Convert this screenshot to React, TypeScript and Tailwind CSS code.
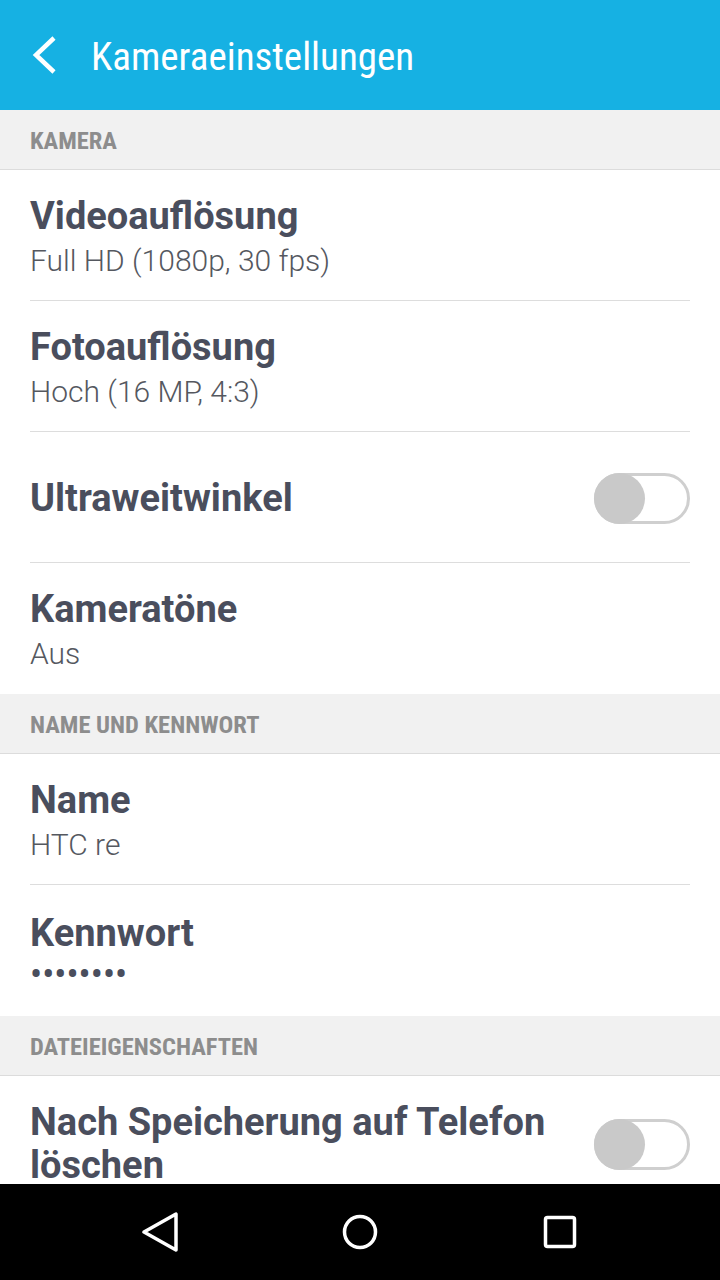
import React from "react";

const condensed = {
  fontFamily: '"Roboto Condensed", "Liberation Sans Narrow", Roboto, sans-serif',
};

type Item = {
  title: string;
  value?: string;
  toggle?: boolean;
  dots?: boolean;
};

type Section = {
  label: string;
  items: Item[];
};

const SECTIONS: Section[] = [
  {
    label: "KAMERA",
    items: [
      { title: "Videoauflösung", value: "Full HD (1080p, 30 fps)" },
      { title: "Fotoauflösung", value: "Hoch (16 MP, 4:3)" },
      { title: "Ultraweitwinkel", toggle: true },
      { title: "Kameratöne", value: "Aus" },
    ],
  },
  {
    label: "NAME UND KENNWORT",
    items: [
      { title: "Name", value: "HTC re" },
      { title: "Kennwort", dots: true },
    ],
  },
];

function Toggle() {
  return (
    <div className="relative h-[51px] w-[96px] shrink-0 rounded-full border-[3px] border-[#cfcfcf] bg-white">
      <div className="absolute -left-[3px] -top-[3px] h-[51px] w-[51px] rounded-full bg-[#c9c9c9]" />
    </div>
  );
}

function SectionHeader({ label }: { label: string }) {
  return (
    <div className="flex h-[60px] items-center border-b border-[#dcdcdc] bg-[#f1f1f1] px-[30px] pt-[3px]">
      <span
        className="text-[24.5px] font-bold text-[#8d8d8d]"
        style={condensed}
      >
        {label}
      </span>
    </div>
  );
}

function Row({ item, last }: { item: Item; last: boolean }) {
  return (
    <div className="px-[30px]">
      <div
        className={`flex h-[131px] items-center justify-between pt-[2px] ${
          last ? "" : "border-b border-[#dddddd]"
        }`}
      >
        <div className="flex flex-col">
          <span className="text-[38px] font-bold leading-[44px] text-[#4a4e5d]">
            {item.title}
          </span>
          {item.value && (
            <span className="mt-[5px] text-[30px] font-light leading-[36px] text-[#55585f]">
              {item.value}
            </span>
          )}
          {item.dots && (
            <span className="mt-[2px] text-[36px] leading-[36px] text-[#4a4e5d]">
              ••••••••
            </span>
          )}
        </div>
        {item.toggle && <Toggle />}
      </div>
    </div>
  );
}

export default function App() {
  return (
    <div
      className="flex h-[1280px] w-[720px] flex-col overflow-hidden bg-white"
      style={{ fontFamily: "Roboto, sans-serif" }}
    >
      <header className="flex h-[110px] shrink-0 items-center bg-[#16b1e3] pl-[30px]">
        <svg width="30" height="40" viewBox="0 0 30 40" fill="none">
          <path d="M24 3 L6 20 L24 37" stroke="white" strokeWidth="4.5" />
        </svg>
        <h1
          className="ml-[31px] pt-[4px] text-[39px] leading-none text-white"
          style={condensed}
        >
          Kameraeinstellungen
        </h1>
      </header>

      <main className="flex-1 overflow-hidden">
        {SECTIONS.map((section) => (
          <div key={section.label}>
            <SectionHeader label={section.label} />
            {section.items.map((item, i) => (
              <Row
                key={item.title}
                item={item}
                last={i === section.items.length - 1}
              />
            ))}
          </div>
        ))}
        <SectionHeader label="DATEIEIGENSCHAFTEN" />
        <div className="flex items-center justify-between px-[30px] pt-[25px]">
          <span className="w-[540px] text-[38px] font-bold leading-[43px] text-[#4a4e5d]">
            Nach Speicherung auf Telefon löschen
          </span>
          <Toggle />
        </div>
      </main>

      <nav className="flex h-[96px] shrink-0 items-center justify-center gap-[160px] bg-black">
        <svg width="40" height="40" viewBox="0 0 40 40" fill="none">
          <path
            d="M36 2 L36 38 L4 20 Z"
            stroke="white"
            strokeWidth="3.5"
            strokeLinejoin="round"
          />
        </svg>
        <svg width="40" height="40" viewBox="0 0 40 40" fill="none">
          <circle cx="20" cy="20" r="15.5" stroke="white" strokeWidth="3.5" />
        </svg>
        <svg width="40" height="40" viewBox="0 0 40 40" fill="none">
          <rect
            x="5.5"
            y="5.5"
            width="29"
            height="29"
            rx="2"
            stroke="white"
            strokeWidth="3.5"
          />
        </svg>
      </nav>
    </div>
  );
}
